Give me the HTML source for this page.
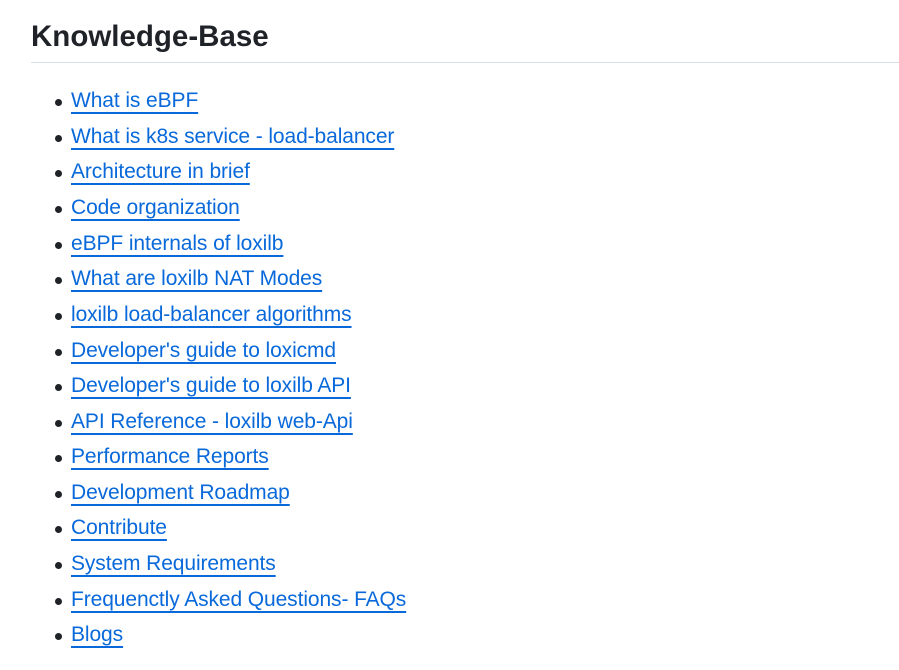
<!DOCTYPE html>
<html><head><style>
body{margin:0;background:#fff;font-family:"Liberation Sans",Arial,sans-serif;width:899px;height:670px;overflow:hidden;position:relative}
h2{position:absolute;left:31px;top:17px;margin:0;font-size:29.5px;font-weight:bold;color:#1f2328;line-height:40px}
.hr{position:absolute;left:31px;right:0;top:62px;height:1px;background:#d8dee4}
ul{margin:0;padding:0;list-style:none}
li{position:absolute;left:71px;font-size:21px;line-height:28px;height:28px;letter-spacing:-0.1px}
li:before{content:"";position:absolute;left:-16px;top:12px;width:7px;height:7px;border-radius:50%;background:#1f2328}
a{color:#0969da;text-decoration:underline;text-decoration-thickness:2px;text-underline-offset:5px}
</style></head><body>
<h2>Knowledge-Base</h2>
<div class="hr"></div>
<ul>
<li style="top:87px"><a>What is eBPF</a></li>
<li style="top:123px"><a>What is k8s service - load-balancer</a></li>
<li style="top:158px"><a>Architecture in brief</a></li>
<li style="top:194px"><a>Code organization</a></li>
<li style="top:230px"><a>eBPF internals of loxilb</a></li>
<li style="top:265px"><a>What are loxilb NAT Modes</a></li>
<li style="top:301px"><a>loxilb load-balancer algorithms</a></li>
<li style="top:337px"><a>Developer's guide to loxicmd</a></li>
<li style="top:372px"><a>Developer's guide to loxilb API</a></li>
<li style="top:408px"><a>API Reference - loxilb web-Api</a></li>
<li style="top:443px"><a>Performance Reports</a></li>
<li style="top:479px"><a>Development Roadmap</a></li>
<li style="top:514px"><a>Contribute</a></li>
<li style="top:550px"><a>System Requirements</a></li>
<li style="top:586px"><a>Frequenctly Asked Questions- FAQs</a></li>
<li style="top:621px"><a>Blogs</a></li>
</ul>
</body></html>
